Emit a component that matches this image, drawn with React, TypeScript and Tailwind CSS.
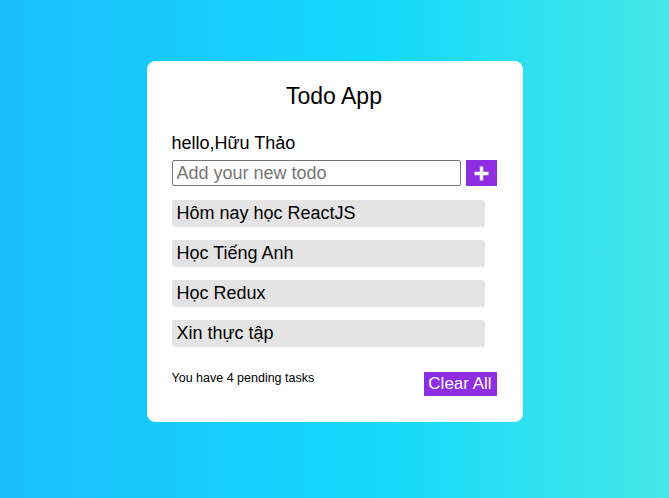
import React from 'react';

const todos = ['Hôm nay học ReactJS', 'Học Tiếng Anh', 'Học Redux', 'Xin thực tập'];

export default function App() {
  return (
    <div
      className="min-h-[498px] w-full bg-[linear-gradient(to_right,#1cbefc,#13d8fb_55%,#46e7e6)] pt-[61px] flex justify-center"
      style={{ fontFamily: '"Liberation Sans", Arial, sans-serif' }}
    >
      <div className="w-[376px] h-[361px] bg-white rounded-[8px] border border-[#e8fbfd] pl-[24px] pr-[25px] pt-[20px] pb-[25px] text-black">
        <h1 className="text-center text-[23px] leading-[28px] mb-[23px]">Todo App</h1>
        <p className="text-[18px] leading-[21px] mb-[6px]">hello,Hữu Thảo</p>
        <div className="flex gap-[5px] mb-[14px]">
          <input
            className="w-[289px] h-[26px] border border-[#767676] rounded-[2px] px-[4px] text-[18px] outline-none placeholder:text-[#757575]"
            placeholder="Add your new todo"
          />
          <button className="w-[31px] h-[26px] bg-[#8e2de2] flex items-center justify-center">
            <svg width="17" height="17" viewBox="0 0 17 17">
              <path d="M8.5 1.5v14M1.5 8.5h14" stroke="white" strokeWidth="3.4" />
            </svg>
          </button>
        </div>
        <ul className="flex flex-col gap-[13px]">
          {todos.map((t) => (
            <li key={t} className="w-[313px] h-[27px] bg-[#e4e4e4] rounded-[3px] px-[5px] text-[18px] leading-[27px]">
              {t}
            </li>
          ))}
        </ul>
        <div className="flex justify-between items-start mt-[23px]">
          <span className="text-[12.5px] leading-[15px] pt-[1px]">You have 4 pending tasks</span>
          <button className="w-[73px] bg-[#8e2de2] text-white text-[17px] leading-[24px] h-[24px] text-center mt-[2px]">Clear All</button>
        </div>
      </div>
    </div>
  );
}
